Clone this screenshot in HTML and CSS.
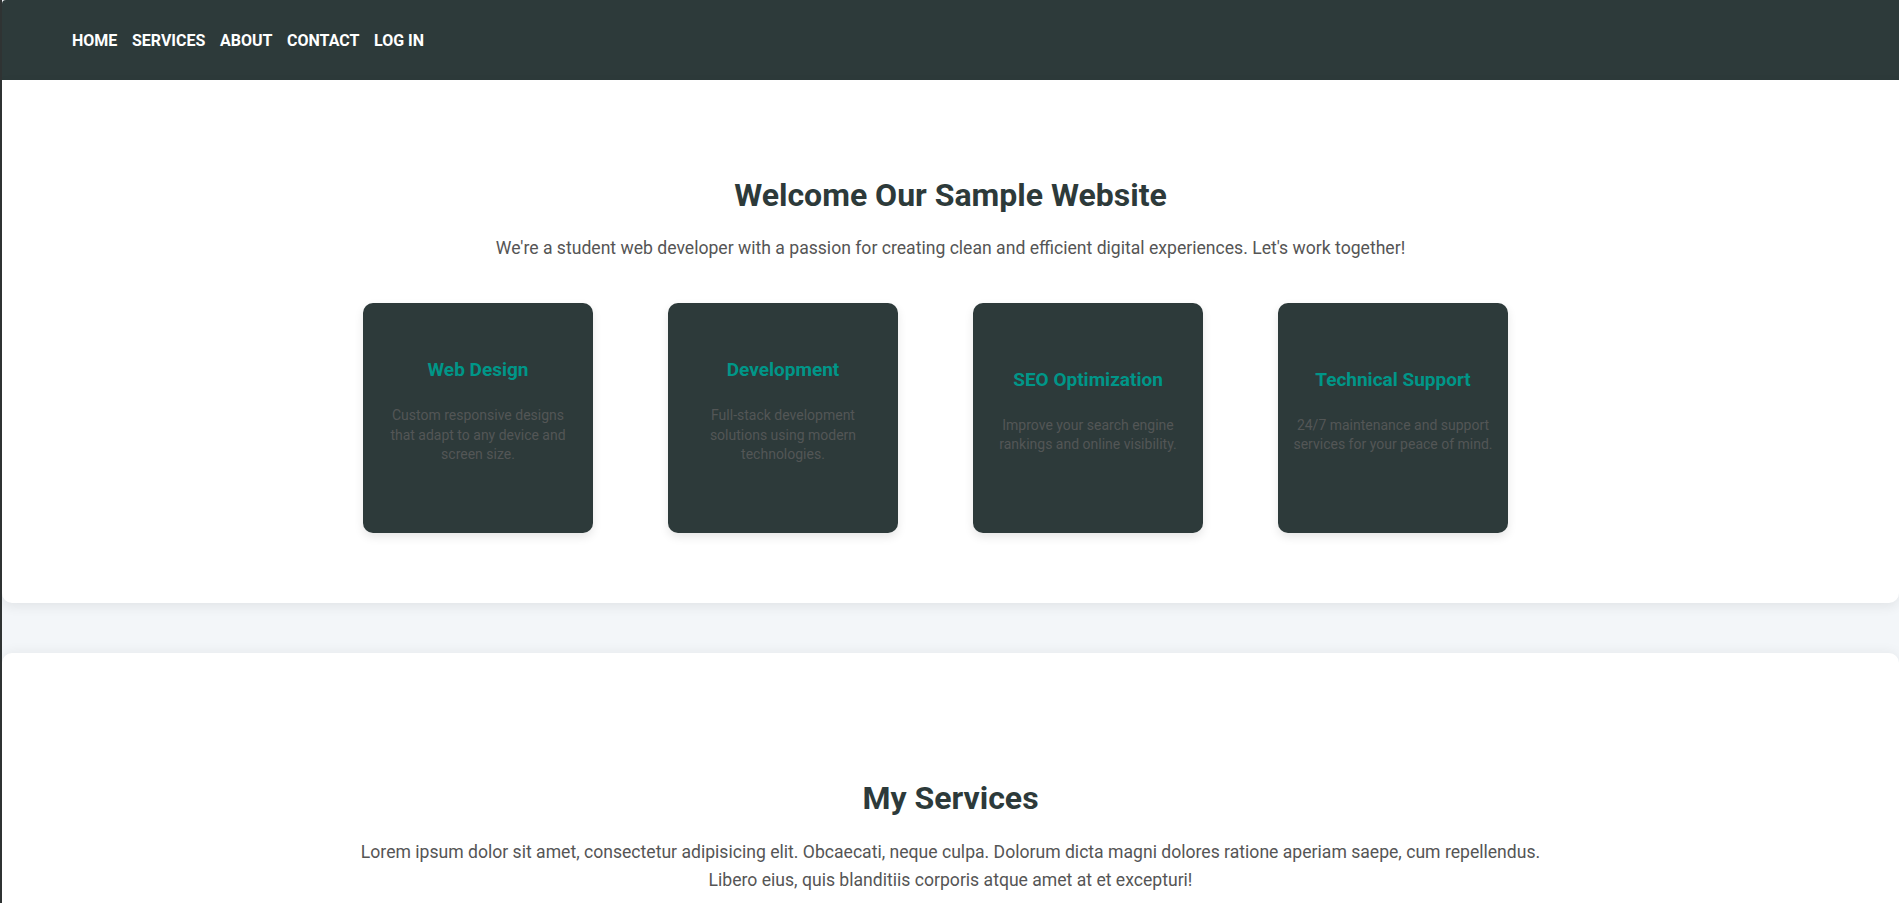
FILE: index.html
```html
<!DOCTYPE html>
<html lang="en">
<head>
<meta charset="utf-8">
<title>Sample Website</title>
<link rel="stylesheet" href="styles.css">
</head>
<body>
<header class="site-header">
  <nav class="nav">
    <a class="nav-link" href="#">Home</a>
    <a class="nav-link" href="#">Services</a>
    <a class="nav-link" href="#">About</a>
    <a class="nav-link" href="#">Contact</a>
    <a class="nav-link" href="#">Log in</a>
  </nav>
</header>
<main>
  <section class="hero">
    <h1 class="section-title">Welcome Our Sample Website</h1>
    <p class="lead">We're a student web developer with a passion for creating clean and efficient digital experiences. Let's work together!</p>
    <div class="cards">
      <div class="card">
        <h3 class="card-title">Web Design</h3>
        <p class="card-text">Custom responsive designs that adapt to any device and screen size.</p>
      </div>
      <div class="card">
        <h3 class="card-title">Development</h3>
        <p class="card-text">Full-stack development solutions using modern technologies.</p>
      </div>
      <div class="card">
        <h3 class="card-title">SEO Optimization</h3>
        <p class="card-text">Improve your search engine rankings and online visibility.</p>
      </div>
      <div class="card">
        <h3 class="card-title">Technical Support</h3>
        <p class="card-text">24/7 maintenance and support services for your peace of mind.</p>
      </div>
    </div>
  </section>
  <section class="services">
    <h2 class="section-title">My Services</h2>
    <p class="lead wide">Lorem ipsum dolor sit amet, consectetur adipisicing elit. Obcaecati, neque culpa. Dolorum dicta magni dolores ratione aperiam saepe, cum repellendus. Libero eius, quis blanditiis corporis atque amet at et excepturi!</p>
  </section>
</main>
</body>
</html>
```

FILE: styles.css
```css
* { box-sizing: border-box; }

html, body {
  margin: 0;
  padding: 0;
}

body {
  font-family: Roboto, "Noto Sans", Arial, sans-serif;
  background: #f3f6f9;
  border-left: 2px solid #2f3333;
  color: #555;
  min-height: 100vh;
}

.site-header {
  background: #2d3a3a;
  height: 80px;
  display: flex;
  align-items: center;
  padding-left: 70px;
  border-top-left-radius: 4px;
}

.nav {
  display: flex;
  gap: 14.6px;
}

.nav-link {
  color: #fff;
  text-decoration: none;
  text-transform: uppercase;
  font-weight: 700;
  font-size: 16px;
}

.hero {
  background: #fff;
  border-radius: 0 0 10px 10px;
  box-shadow: 0 4px 12px rgba(0, 0, 0, 0.07);
  padding: 96px 20px 70px;
  display: flex;
  flex-direction: column;
  align-items: center;
}

.section-title {
  margin: 0 0 20px;
  font-size: 32px;
  line-height: 1.2;
  font-weight: 700;
  color: #2d3a3a;
}

.lead {
  margin: 0;
  font-size: 17.6px;
  line-height: 28px;
  color: #555;
  text-align: center;
}

.lead.wide {
  max-width: 1200px;
}

.cards {
  display: flex;
  justify-content: center;
  gap: 75px;
  margin-top: 41px;
  padding-right: 30px;
}

.card {
  width: 230px;
  height: 230px;
  background: #2d3a3a;
  border-radius: 10px;
  box-shadow: 0 4px 10px rgba(0, 0, 0, 0.1);
  padding: 0 15px;
  display: flex;
  flex-direction: column;
  justify-content: center;
  align-items: center;
  text-align: center;
}

.card-title {
  margin: 0 0 11px;
  font-size: 19px;
  font-weight: 700;
  color: #009688;
}

.card-text {
  margin: 14px 0;
  font-size: 14px;
  line-height: 1.4;
  color: #535656;
}

.services {
  background: #fff;
  margin-top: 50px;
  border-radius: 10px 10px 0 0;
  box-shadow: 0 -2px 12px rgba(0, 0, 0, 0.05);
  padding: 126px 20px 100px;
  display: flex;
  flex-direction: column;
  align-items: center;
}
```
